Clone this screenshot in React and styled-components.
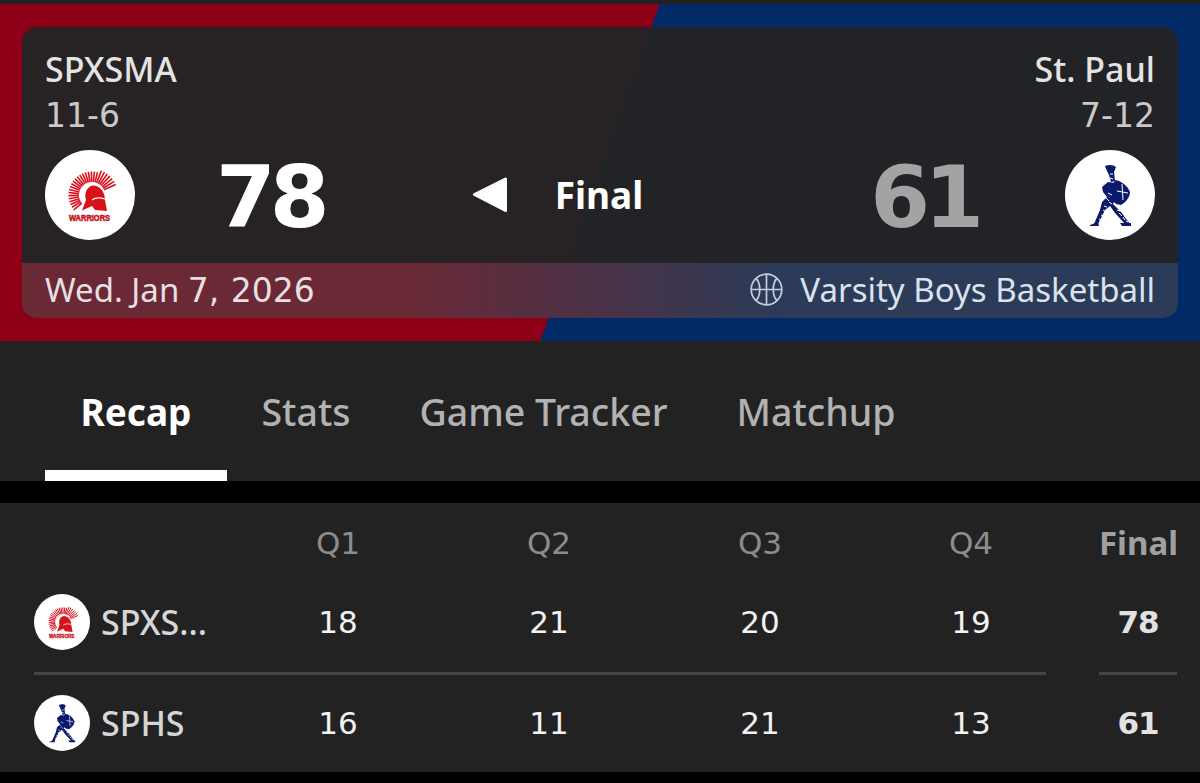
import React from "react";
import styled, { createGlobalStyle } from "styled-components";

const Global = createGlobalStyle`
  html, body { margin: 0; padding: 0; background: #000; }
  body { font-family: "Noto Sans", "Open Sans", sans-serif; width: 1200px; height: 783px; overflow: hidden; }
  * { box-sizing: border-box; }
`;

const digits = `"DejaVu Sans", "Noto Sans", sans-serif`;

const Page = styled.div`
  width: 1200px;
  height: 783px;
  display: flex;
  flex-direction: column;
  background: #000;
`;
const TopStrip = styled.div`height: 4px; background: #222224;`;
const Hero = styled.section`
  height: 337px;
  padding: 23px 22px;
  background: linear-gradient(109.45deg, #8e0016 50%, #012a66 50%);
`;
const Card = styled.div`
  height: 291px;
  border-radius: 15px;
  overflow: hidden;
  display: flex;
  flex-direction: column;
  background: linear-gradient(109.45deg, #272324 50%, #222326 50%);
`;
const CardBody = styled.div`
  height: 236px;
  padding: 20px 23px 0;
  display: flex;
  flex-direction: column;
`;
const Names = styled.div`
  display: flex;
  justify-content: space-between;
`;
const TeamHead = styled.div`
  display: flex;
  flex-direction: column;
  align-items: ${p => (p.$right ? "flex-end" : "flex-start")};
`;
const TeamName = styled.div`
  font-size: 34px;
  line-height: 45px;
  font-weight: 500;
  color: #e4e4e4;
`;
const Record = styled.div`
  font-family: ${digits};
  font-size: 33px;
  line-height: 45px;
  padding-top: 1px;
  margin-bottom: -1px;
  color: #c9c9c9;
`;
const ScoreRow = styled.div`
  display: flex;
  align-items: center;
  margin-top: 11px;
`;
const Side = styled.div`
  display: flex;
  align-items: center;
  gap: ${p => p.$gap}px;
`;
const Middle = styled.div`
  display: flex;
  align-items: center;
  gap: 47px;
  margin-left: 148px;
  margin-right: auto;
`;
const LogoDisc = styled.div`
  width: ${p => p.$size}px;
  height: ${p => p.$size}px;
  flex: none;
  border-radius: 50%;
  background: #fff;
  overflow: hidden;
  display: flex;
`;
const Score = styled.div`
  font-family: ${digits};
  font-size: 86px;
  line-height: 90px;
  padding-top: 4px;
  font-weight: 700;
  letter-spacing: -6px;
  color: ${p => (p.$dim ? "#a3a3a3" : "#fff")};
`;
const Status = styled.div`
  font-size: 37px;
  line-height: 44px;
  font-weight: 700;
  color: #fff;
`;
const MetaBar = styled.div`
  height: 55px;
  padding: 0 23px 3px;
  display: flex;
  align-items: center;
  justify-content: space-between;
  background: linear-gradient(90deg, #6b2935 33%, #2b3b58 66%);
  font-size: 33px;
  color: #e6dfe4;
`;
const Num = styled.span`
  font-family: ${digits};
  font-size: 33px;
  word-spacing: 1px;
`;
const Sport = styled.div`
  display: flex;
  align-items: center;
  gap: 17px;
  color: #dbe2ee;
`;
const Tabs = styled.nav`
  height: 140px;
  padding-left: 45px;
  display: flex;
  background: #222;
`;
const Tab = styled.div`
  padding: 49px ${p => (p.$active ? "35.500px" : "34.500px")} 0;
  height: 140px;
  font-size: ${p => (p.$active ? "37px" : "37.500px")};
  line-height: 44px;
  font-weight: ${p => (p.$active ? 700 : 500)};
  color: ${p => (p.$active ? "#fff" : "#b2b2b2")};
  border-bottom: 11px solid ${p => (p.$active ? "#fff" : "transparent")};
`;
const Gap = styled.div`height: 22px; background: #000;`;
const Table = styled.section`
  height: 269px;
  padding: 0 23px 0 34px;
  background: #222;
  display: flex;
  flex-direction: column;
`;
const Row = styled.div`
  height: ${p => p.$h}px;
  display: flex;
  align-items: center;
`;
const Main = styled.div`
  width: 1012px;
  display: flex;
  align-items: center;
`;
const NameCell = styled.div`
  flex: 0 0 229px;
  display: flex;
  align-items: center;
  gap: 11px;
`;
const ShortName = styled.div`
  font-size: 34px;
  line-height: 44px;
  font-weight: 500;
  color: #d6d6d6;
  white-space: nowrap;
`;
const Quarters = styled.div`
  width: 783px;
  display: grid;
  grid-template-columns: repeat(4, 150px);
  column-gap: 61px;
`;
const Cell = styled.div`
  font-family: ${digits};
  text-align: center;
  font-size: 31px;
  line-height: 44px;
  color: ${p => (p.$head ? "#8c8c8c" : "#f2f2f2")};
`;
const TotalCell = styled.div`
  width: 78px;
  margin-left: 53px;
  text-align: center;
  font-family: ${digits};
  font-size: 31px;
  letter-spacing: -1px;
  line-height: 44px;
  font-weight: 700;
  color: #e2e2e2;
`;
const FinalHead = styled.div`
  width: 78px;
  margin-left: 53px;
  text-align: center;
  font-size: 33px;
  line-height: 44px;
  font-weight: 700;
  color: #a0a0a0;
`;
const Rule = styled.div`
  height: 3px;
  background: #444;
  width: ${p => p.$w}px;
`;
const RuleRow = styled.div`
  height: 3px;
  margin-top: 11px;
  display: flex;
  justify-content: space-between;
`;

const rays = Array.from({ length: 27 }, (_, i) => -24 - i * 7.5);

function WarriorsLogo() {
  return (
    <svg width="100%" height="100%" viewBox="0 0 90 90">
      <g stroke="#d8111b" strokeWidth="1.6">
        {rays.map(a => {
          const r = (a * Math.PI) / 180;
          const c = Math.cos(r);
          const s = Math.sin(r);
          const outer = a > -70 ? 26 : 23.5;
          return <line key={a} x1={47 + 13 * c} y1={45 + 13 * s} x2={47 + outer * c} y2={45 + outer * s} />;
        })}
      </g>
      <path
        fill="#d8111b"
        d="M48 35.500 C55 35.500 60 42 60 50 L62 61 L50 60 L47 56 L37 60.500 L41 50 C39 43 42 36.500 48 35.500 Z"
      />
      <path fill="none" stroke="#fff" strokeWidth="1.200" d="M47 50 C50 47.500 55 47.500 60 49" />
      <text
        x="24"
        y="70.500"
        textLength="41"
        lengthAdjust="spacingAndGlyphs"
        fontFamily="Liberation Sans, sans-serif"
        fontWeight="700"
        fontSize="8.500"
        fill="#c8101a"
        stroke="#c8101a"
        strokeWidth="0.5"
      >
        WARRIORS
      </text>
    </svg>
  );
}

function SpartanLogo() {
  return (
    <svg width="100%" height="100%" viewBox="0 0 90 90">
      <g fill="#0b1a6c">
        <path d="M40 16 C44 14 49 15 51 17 L49 22 L50 31 L46 32 L44 25 C42 21 41 19 40 16 Z" />
        <path d="M50 30 C56 31 62 35 65 42 C65 47 61 52 56 55 L51 54 L46 49 L47 36 Z" />
        <path d="M43 32 L50 33 L52 46 L48 54 L56 62 L65 74 L60 74 L50 63 L45 56 L40 60 L33 74 L29 74 L35 60 L37 52 L42 47 L38 42 L37 37 Z" />
        <path d="M25 75 L33 72 L34 76 L25 76 Z" />
        <path d="M55 73 L66 73 L66 76 L57 76 Z" />
      </g>
      <g stroke="#fff" strokeWidth="1" fill="none">
        <path d="M57 34 L58 50 M52 41 L63 43" />
        <path d="M45 24 L48 24 M45 28 L48 29" />
        <path d="M43 43 L47 45 M40 47 L44 51 M44 52 L47 54 M39 56 L42 57 M38 60 L41 62 M36 65 L39 66 M34 69 L37 70 M52 60 L55 61 M54 63 L57 66 M58 67 L60 70 M61 71 L63 72" />
      </g>
    </svg>
  );
}

function BallIcon() {
  return (
    <svg width="33" height="33" viewBox="0 0 33 33" fill="none" stroke="#c4cedd" strokeWidth="1.7">
      <circle cx="16.500" cy="16.500" r="15.300" />
      <path d="M16.500 1.200 V31.800 M1.200 16.500 H31.800" />
      <path d="M6 5.500 C11 10 11 23 6 27.500" />
      <path d="M27 5.500 C22 10 22 23 27 27.500" />
    </svg>
  );
}

function Arrow() {
  return (
    <svg width="36" height="36" viewBox="0 0 36 36">
      <path
        fill="#fff"
        stroke="#fff"
        strokeWidth="3"
        strokeLinejoin="round"
        d="M2.500 17.500 L33.500 2 V33.500 Z"
      />
    </svg>
  );
}

const lines = [
  { name: "SPXS...", q: [18, 21, 20, 19], total: 78 },
  { name: "SPHS", q: [16, 11, 21, 13], total: 61 },
];

export default function App() {
  return (
    <Page>
      <Global />
      <TopStrip />
      <Hero>
        <Card>
          <CardBody>
            <Names>
              <TeamHead>
                <TeamName>SPXSMA</TeamName>
                <Record>11-6</Record>
              </TeamHead>
              <TeamHead $right>
                <TeamName>St. Paul</TeamName>
                <Record>7-12</Record>
              </TeamHead>
            </Names>
            <ScoreRow>
              <Side $gap={81}>
                <LogoDisc $size={90}><WarriorsLogo /></LogoDisc>
                <Score>78</Score>
              </Side>
              <Middle>
                <Arrow />
                <Status>Final</Status>
              </Middle>
              <Side $gap={87}>
                <Score $dim>61</Score>
                <LogoDisc $size={90}><SpartanLogo /></LogoDisc>
              </Side>
            </ScoreRow>
          </CardBody>
          <MetaBar>
            <span>Wed. Jan <Num>7, 2026</Num></span>
            <Sport>
              <BallIcon />
              <span>Varsity Boys Basketball</span>
            </Sport>
          </MetaBar>
        </Card>
      </Hero>
      <Tabs>
        <Tab $active>Recap</Tab>
        <Tab>Stats</Tab>
        <Tab>Game Tracker</Tab>
        <Tab>Matchup</Tab>
      </Tabs>
      <Gap />
      <Table>
        <Row $h={80}>
          <Main>
            <NameCell />
            <Quarters>
              {["Q1", "Q2", "Q3", "Q4"].map(q => <Cell key={q} $head>{q}</Cell>)}
            </Quarters>
          </Main>
          <FinalHead>Final</FinalHead>
        </Row>
        <Row $h={78}>
          <Main>
            <NameCell>
              <LogoDisc $size={56}><WarriorsLogo /></LogoDisc>
              <ShortName>{lines[0].name}</ShortName>
            </NameCell>
            <Quarters>
              {lines[0].q.map((v, i) => <Cell key={i}>{v}</Cell>)}
            </Quarters>
          </Main>
          <TotalCell>{lines[0].total}</TotalCell>
        </Row>
        <RuleRow>
          <Rule $w={1012} />
          <Rule $w={78} />
        </RuleRow>
        <Row $h={95}>
          <Main>
            <NameCell>
              <LogoDisc $size={56}><SpartanLogo /></LogoDisc>
              <ShortName>{lines[1].name}</ShortName>
            </NameCell>
            <Quarters>
              {lines[1].q.map((v, i) => <Cell key={i}>{v}</Cell>)}
            </Quarters>
          </Main>
          <TotalCell>{lines[1].total}</TotalCell>
        </Row>
      </Table>
    </Page>
  );
}
